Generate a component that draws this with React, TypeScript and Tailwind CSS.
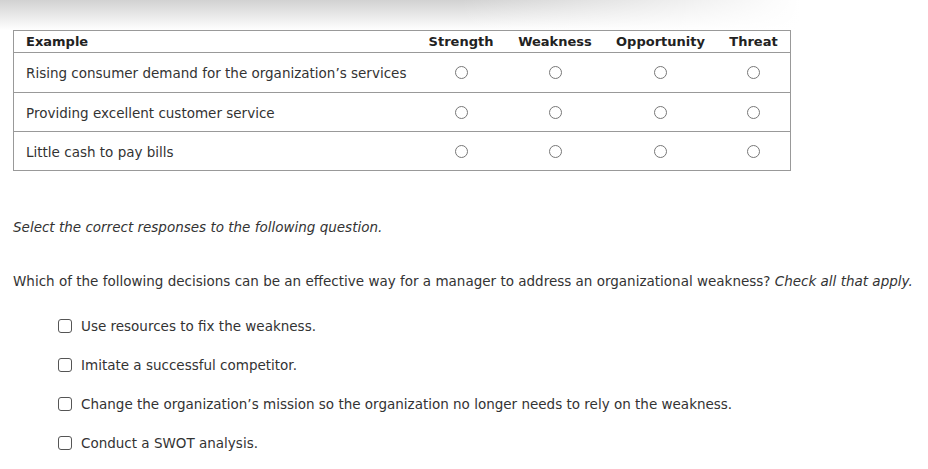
const columns = ['Strength', 'Weakness', 'Opportunity', 'Threat'];

const examples = [
  'Rising consumer demand for the organization\u2019s services',
  'Providing excellent customer service',
  'Little cash to pay bills',
];

const choices = [
  'Use resources to fix the weakness.',
  'Imitate a successful competitor.',
  'Change the organization\u2019s mission so the organization no longer needs to rely on the weakness.',
  'Conduct a SWOT analysis.',
];

function Radio() {
  return <span className="block w-[13px] h-[13px] rounded-full border border-[#777] bg-white" />;
}

function Checkbox() {
  return <span className="block w-[14px] h-[14px] rounded-[3px] border border-[#555] bg-white" />;
}

export default function App() {
  return (
    <div className="relative w-[928px] h-[469px] bg-white text-[#333] text-[13.5px] font-['DejaVu_Sans',Verdana,sans-serif] overflow-hidden">
      {/* top shadow */}
      <div className="absolute top-0 left-0 w-[800px] h-[30px] bg-gradient-to-b from-[#d2d2d2] to-white" />
      <div className="absolute top-0 left-[460px] w-[340px] h-[30px] bg-gradient-to-r from-transparent to-white" />

      <div className="relative pt-[30px] pl-[13px]">
        {/* SWOT table */}
        <div className="w-[778px] border border-[#999] bg-white">
          <div className="grid grid-cols-[402px_90px_98px_113px_73px] h-[21px] items-center font-bold text-[13px] text-[#222]">
            <div className="pl-[12px]">Example</div>
            {columns.map((c) => (
              <div key={c} className="text-center">{c}</div>
            ))}
          </div>
          {examples.map((e, i) => (
            <div
              key={e}
              className={`grid grid-cols-[402px_90px_98px_113px_73px] items-center border-t border-[#999] ${i === 0 ? 'h-[40px]' : 'h-[39px]'}`}
            >
              <div className="pl-[12px] pt-[2px]">{e}</div>
              {columns.map((c) => (
                <div key={c} className="flex justify-center">
                  <Radio />
                </div>
              ))}
            </div>
          ))}
        </div>

        <p className="mt-[46px] italic">Select the correct responses to the following question.</p>

        <p className="mt-[34px]">
          Which of the following decisions can be an effective way for a manager to address an organizational weakness?{' '}
          <span className="italic">Check all that apply.</span>
        </p>

        <div className="mt-[26px] pl-[45px] flex flex-col gap-[22px]">
          {choices.map((c) => (
            <label key={c} className="flex items-center gap-[9px] h-[17px]">
              <Checkbox />
              <span>{c}</span>
            </label>
          ))}
        </div>
      </div>
    </div>
  );
}
